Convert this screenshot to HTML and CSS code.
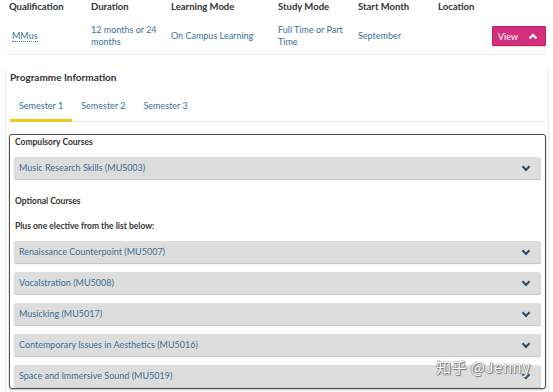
FILE: index.html
```html
<!DOCTYPE html>
<html lang="en">
<head>
    <meta charset="UTF-8">
    <meta name="viewport" content="width=device-width, initial-scale=1.0">
    <link rel="stylesheet" href="styles.css">
    <title>MMus Programme</title>
</head>
<body>
    <div class="summary">
        <div class="summary-head">
            <span>Qualification</span>
            <span>Duration</span>
            <span>Learning Mode</span>
            <span>Study Mode</span>
            <span>Start Month</span>
            <span>Location</span>
            <span></span>
        </div>
        <div class="summary-row">
            <span><a class="qual">MMus</a></span>
            <span>12 months or 24 months</span>
            <span>On Campus Learning</span>
            <span>Full Time or Part Time</span>
            <span>September</span>
            <span></span>
            <span class="view-cell">
                <button class="view-btn">View
                    <svg width="10" height="7" viewBox="0 0 10 7"><path d="M1.5 5.5 L5 2 L8.5 5.5" fill="none" stroke="white" stroke-width="2.2"/></svg>
                </button>
            </span>
        </div>
    </div>

    <div class="panel">
        <h2>Programme Information</h2>
        <div class="tabs">
            <span class="tab active">Semester 1</span>
            <span class="tab">Semester 2</span>
            <span class="tab">Semester 3</span>
        </div>

        <div class="courses">
            <h3>Compulsory Courses</h3>
            <div class="course">Music Research Skills (MUS003)<span class="chev"></span></div>

            <h3 class="gap">Optional Courses</h3>
            <h3 class="gap-sm">Plus one elective from the list below:</h3>
            <div class="course">Renaissance Counterpoint (MU5007)<span class="chev"></span></div>
            <div class="course">Vocalstration (MU5008)<span class="chev"></span></div>
            <div class="course">Musicking (MU5017)<span class="chev"></span></div>
            <div class="course">Contemporary Issues in Aesthetics (MU5016)<span class="chev"></span></div>
            <div class="course">Space and Immersive Sound (MU5019)<span class="chev"></span></div>
        </div>
    </div>

    <div class="watermark">知乎 @Jenny</div>
</body>
</html>
```

FILE: styles.css
```css
body {
    margin: 0;
    font-family: "Lato", "Noto Sans", sans-serif;
    font-size: 9px;
    color: #333;
    background: #fff;
    width: 553px;
    height: 392px;
    overflow: hidden;
    position: relative;
}

.summary {
    margin-left: 5px;
    padding-left: 4px;
    border-bottom: 1px solid #ececec;
    width: 537px;
}

.summary-head,
.summary-row {
    display: grid;
    grid-template-columns: 82px 80px 107px 80px 80px 1fr 60px;
}

.summary-head {
    font-weight: bold;
    font-size: 9.5px;
    height: 14px;
    line-height: 14px;
}

.summary-row {
    align-items: center;
    height: 36px;
    padding-top: 4px;
    color: #3c6f97;
    line-height: 12px;
}

.summary-row span {
    padding-right: 6px;
}

.qual {
    margin-left: 3px;
    border-bottom: 1px dotted #3c6f97;
}

.view-cell {
    display: flex;
    justify-content: flex-end;
    padding-right: 0 !important;
}

.view-btn {
    background-color: #d42f7d;
    border: 1px solid #c21f6b;
    color: white;
    font-family: inherit;
    font-size: 9px;
    width: 54px;
    height: 20px;
    padding: 0 7px 0 5px;
    display: flex;
    align-items: center;
    justify-content: space-between;
    border-radius: 1px;
    box-shadow: 0 1px 1px rgba(0, 0, 0, 0.15);
}

.panel {
    margin-left: 5px;
    width: 544px;
    border-left: 1px solid #ececec;
    border-right: 1px solid #ececec;
    height: 337px;
    padding: 0 2px 0 3px;
    box-sizing: border-box;
}

h2 {
    font-size: 10px;
    margin: 15px 0 0 1px;
    line-height: 14px;
}

.tabs {
    margin-top: 15px;
    display: flex;
    border-bottom: 1px solid #e6e6e6;
    margin-left: 1px;
}

.tab {
    color: #3c6f97;
    padding: 0 9px 6px;
    line-height: 14px;
    border-bottom: 3px solid transparent;
    margin-bottom: -1px;
}

.tab.active {
    border-bottom-color: #f2c81b;
}

.courses {
    margin-top: 12px;
    border: 1.5px solid #4a4a4a;
    border-radius: 3px;
    box-shadow: 0 1px 2px rgba(0, 0, 0, 0.25);
    padding: 0 4px 1px 4px;
    height: 255px;
    box-sizing: border-box;
}

h3 {
    font-size: 8.5px;
    margin: 0 0 0 1px;
    line-height: 14px;
}

h3.gap {
    margin-top: 15px;
}

h3.gap-sm {
    margin-top: 11px;
}

.course {
    background: #dddddd;
    border-radius: 2px;
    box-shadow: 0 1px 1px #c4c4c4;
    height: 22px;
    line-height: 22px;
    padding-left: 5px;
    color: #3c6f97;
    margin-top: 9px;
    position: relative;
}

.courses h3 + .course {
    margin-top: 8px;
}

.chev {
    position: absolute;
    right: 12px;
    top: 7px;
    width: 4px;
    height: 4px;
    border-right: 2px solid #1d4f7a;
    border-bottom: 2px solid #1d4f7a;
    transform: rotate(45deg);
}

.watermark {
    position: absolute;
    left: 436px;
    top: 356px;
    font-family: "Noto Sans CJK SC", sans-serif;
    font-size: 15px;
    color: #fff;
    text-shadow: 0 0 1px #666, 0 0 1px #666, 1px 1px 1px #777;
    letter-spacing: 0.5px;
}
```
